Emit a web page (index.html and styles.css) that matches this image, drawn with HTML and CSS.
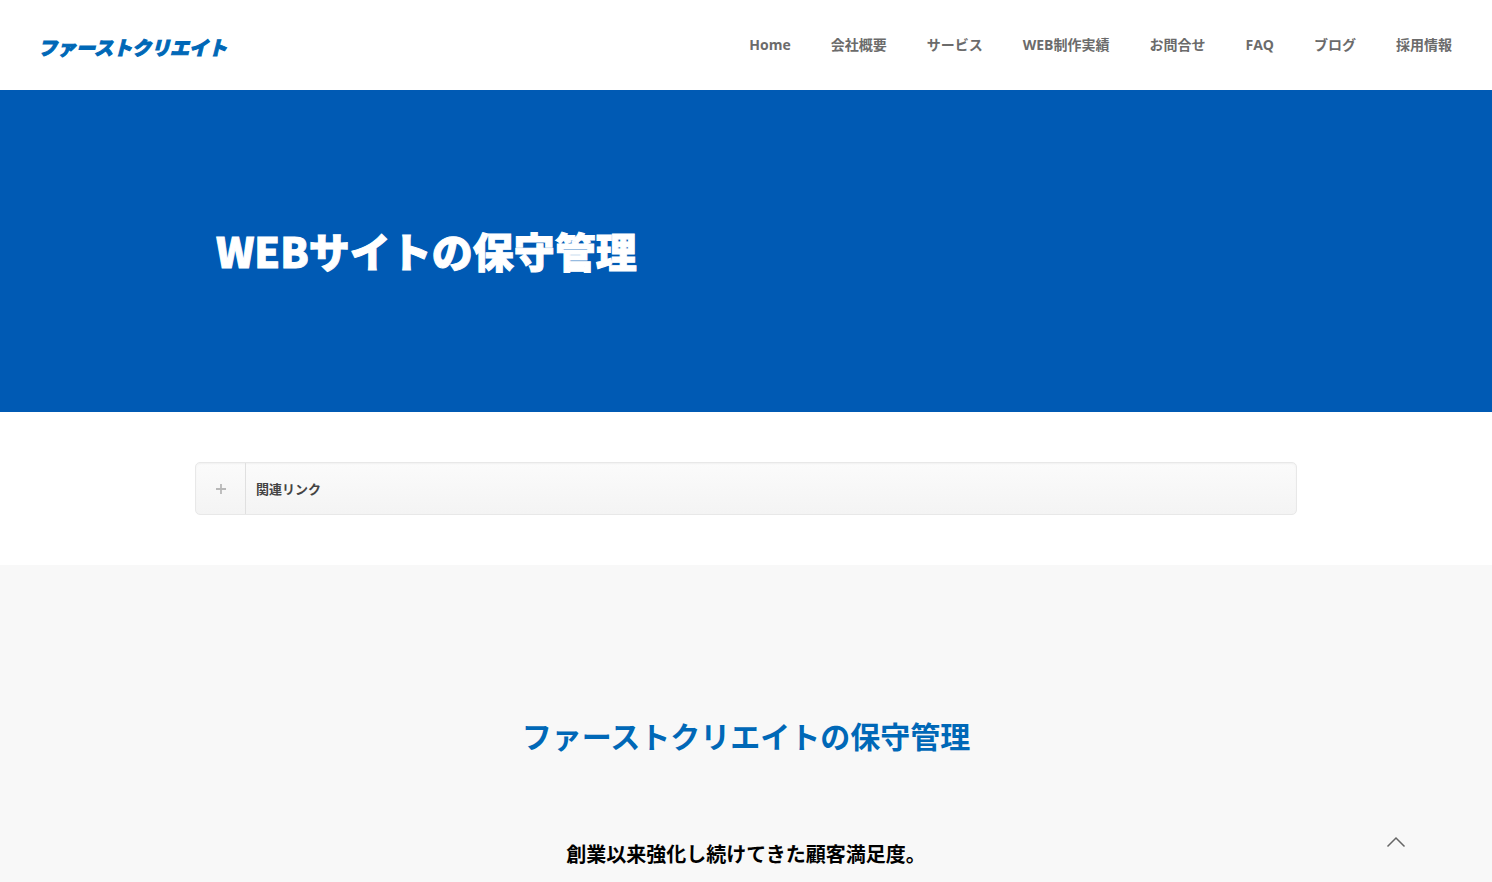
FILE: index.html
```
<!DOCTYPE html>
<html lang="ja">
<head>
<meta charset="UTF-8">
<meta name="viewport" content="width=device-width, initial-scale=1.0">
<title>WEBサイトの保守管理</title>
<link rel="stylesheet" href="styles.css">
</head>
<body>

<header class="header">
  <a class="logo" href="#">ファーストクリエイト</a>
  <nav class="menu">
    <a href="#">Home</a>
    <a href="#">会社概要</a>
    <a href="#">サービス</a>
    <a href="#">WEB制作実績</a>
    <a href="#">お問合せ</a>
    <a href="#">FAQ</a>
    <a href="#">ブログ</a>
    <a href="#">採用情報</a>
  </nav>
</header>

<section class="hero">
  <h1>WEBサイトの保守管理</h1>
</section>

<main>
  <section class="related">
    <button class="accordion" type="button" aria-expanded="false">
      <span class="accordion-icon">
        <svg width="10" height="10" viewBox="0 0 10 10" aria-hidden="true">
          <path d="M5 0V10M0 5H10" stroke="#b8b8b8" stroke-width="1.8"/>
        </svg>
      </span>
      <span class="accordion-title">関連リンク</span>
    </button>
  </section>

  <section class="about">
    <h2>ファーストクリエイトの保守管理</h2>
    <h3>創業以来強化し続けてきた顧客満足度。</h3>
  </section>
</main>

<a class="to-top" href="#" aria-label="ページの先頭へ">
  <svg width="20" height="12" viewBox="0 0 20 12" aria-hidden="true">
    <path d="M1.5 10.5L10 2L18.5 10.5" fill="none" stroke="#666" stroke-width="1.5"/>
  </svg>
</a>

</body>
</html>
```
FILE: styles.css
```
body {
  margin: 0;
  font-family: "Noto Sans CJK JP", sans-serif;
  background: #fff;
  overflow-x: hidden;
}

h1, h2, h3 {
  margin: 0;
}

/* Header */
.header {
  display: flex;
  align-items: center;
  justify-content: space-between;
  height: 90px;
  padding: 0 40px 0 38px;
}

.logo {
  padding-top: 2px;
  color: #0068b7;
  font-size: 19px;
  font-style: italic;
  font-weight: 900;
  text-decoration: none;
  white-space: nowrap;
  -webkit-text-stroke: 1px #0068b7;
}

.menu {
  display: flex;
  gap: 40px;
}

.menu a {
  color: #6b6b6b;
  font-family: "Open Sans", "Noto Sans CJK JP", sans-serif;
  font-size: 14px;
  font-weight: 700;
  line-height: 20px;
  text-decoration: none;
  white-space: nowrap;
}

/* Page title */
.hero {
  padding: 131px 216px 133px;
  background: #005ab4;
}

.hero h1 {
  color: #fff;
  font-size: 41px;
  font-weight: 900;
  line-height: 58px;
  -webkit-text-stroke: 1px #fff;
}

/* Related links */
.related {
  max-width: 1102px;
  margin: 0 auto;
  padding: 50px 0;
}

.accordion {
  display: flex;
  align-items: stretch;
  box-sizing: border-box;
  width: 100%;
  height: 53px;
  padding: 0;
  border: 1px solid #e8e8e8;
  border-radius: 5px;
  background: linear-gradient(#fbfbfb, #f4f4f4);
  box-shadow: inset 0 1px 2px #f1f1f1;
  font-family: inherit;
  text-align: left;
  cursor: pointer;
}

.accordion-icon {
  display: flex;
  align-items: center;
  justify-content: center;
  width: 49px;
  border-right: 1px solid #e0e0e0;
}

.accordion-title {
  align-self: center;
  padding-left: 10px;
  color: #444;
  font-size: 13px;
  font-weight: 700;
}

/* About */
.about {
  padding: 148px 40px;
  background: #f8f8f8;
  text-align: center;
}

.about h2 {
  color: #0068b7;
  font-size: 30px;
  line-height: 44px;
}

.about h3 {
  margin-top: 82px;
  color: #000;
  font-size: 20px;
  line-height: 30px;
}

.to-top {
  position: fixed;
  right: 76px;
  bottom: 20px;
  display: flex;
  align-items: center;
  justify-content: center;
  width: 40px;
  height: 40px;
}
```
